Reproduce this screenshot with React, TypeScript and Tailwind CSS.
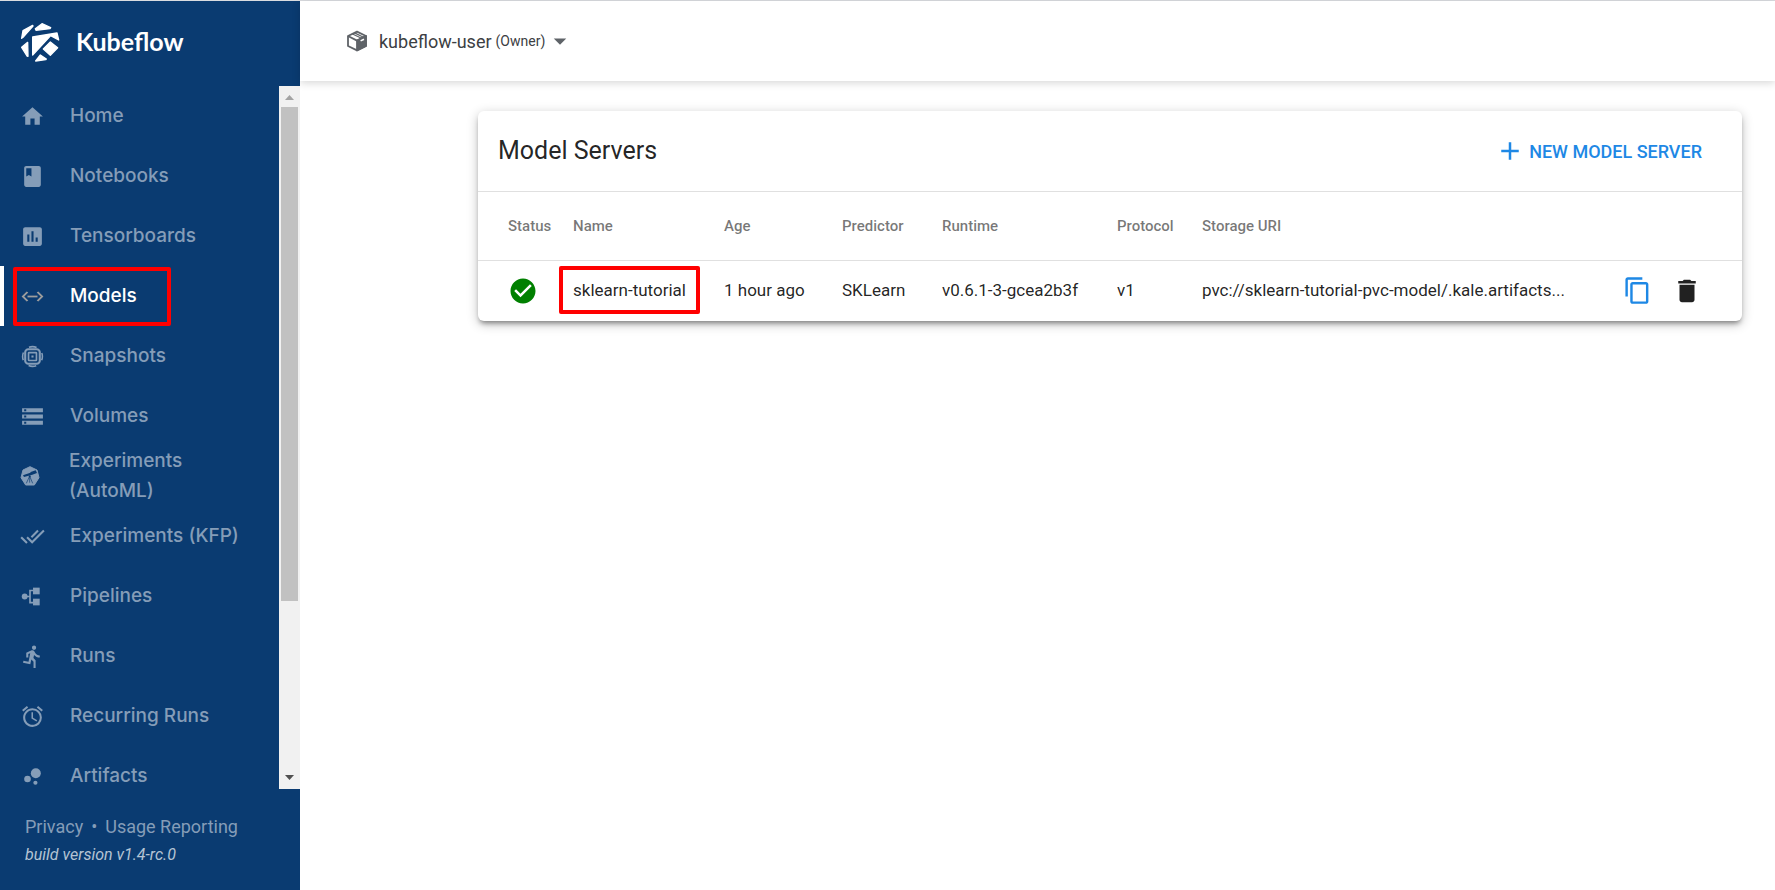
import React, { useState } from 'react';
import {
    MdAccessAlarm,
    MdAdd,
    MdArrowDropDown,
    MdAssessment,
    MdBubbleChart,
    MdCheckCircle,
    MdClass,
    MdContentCopy,
    MdDelete,
    MdDirectionsRun,
    MdDoneAll,
    MdHome,
    MdStorage,
} from 'react-icons/md';

function Logo() {
    return (
        <svg className="h-10 w-10" viewBox="0 2 120 120" fill="#fff" stroke="#fff" strokeWidth="4" strokeLinejoin="round">
            <path d="M5 51 9 28 38 12 39 14 11 46Z" />
            <path d="M46 22 66 7 92 19 90 22 48 27Z" />
            <path d="M38 47 111 35 116 56 92 43 38 101Z" />
            <path d="M91 62 113 79 91 102 70 83Z" />
            <path d="M23 63 24 105 21 104 5 78Z" />
            <path d="M61 101 79 113 77 115 47 119Z" />
        </svg>
    );
}

function ModelsIcon() {
    return (
        <svg className="h-[25px] w-[25px]" viewBox="0 0 24 24" fill="none" stroke="currentColor" strokeWidth="2">
            <path d="M7.2 6.6 2.8 12 7.2 17.4M16.8 6.6 21.2 12 16.8 17.4" transform="matrix(1 0 0 .8 0 2.4)" />
            <path d="M7.2 12H16.8" strokeWidth="1.7" />
        </svg>
    );
}

function SnapshotIcon() {
    return (
        <svg className="h-[25px] w-[25px]" viewBox="0 0 24 24" fill="none" stroke="currentColor">
            <circle cx="12" cy="12" r="9.5" strokeWidth="1.5" strokeDasharray="7.5 7.42" strokeDashoffset="3.75" />
            <rect x="5" y="5" width="14" height="14" rx="3" strokeWidth="2" />
            <rect x="8.2" y="8.2" width="7.6" height="7.6" rx="0.5" strokeWidth="1.6" />
            <rect x="11" y="11" width="2" height="2" fill="currentColor" stroke="none" />
        </svg>
    );
}

function KatibIcon() {
    return (
        <svg className="mr-1 h-5 w-5" viewBox="0 0 60 60">
            <path d="M30 2 51 12 57 35 43 57 17 57 3 35 9 12Z" fill="currentColor" stroke="currentColor" strokeWidth="3" strokeLinejoin="round" />
            <path d="M9 28 31 20 32 18 47 13 51 21 37 26 12 33Z" fill="#0a3b71" />
            <path d="M29 30 19 52M29 30V50M29 30 38 52" stroke="#0a3b71" strokeWidth="2" fill="none" />
            <circle cx="29" cy="31" r="3" fill="#0a3b71" />
        </svg>
    );
}

function PipelineIcon() {
    return (
        <svg className="h-[25px] w-[25px]" viewBox="0 0 24 24" fill="currentColor">
            <circle cx="4.5" cy="12" r="2.8" />
            <rect x="12.5" y="3.5" width="6.4" height="6.4" />
            <rect x="12.5" y="14.1" width="6.4" height="6.4" />
            <path d="M5 12H9.6M13 6.2H9.6V17.8H13" fill="none" stroke="currentColor" strokeWidth="1.6" />
        </svg>
    );
}

function PackageIcon() {
    return (
        <svg className="h-6 w-6" viewBox="0 0 24 24" fill="none" stroke="#5f6368" strokeWidth="1.8" strokeLinejoin="round">
            <path d="M12 2.6 21 7V17L12 21.4 3 17V7Z" />
            <path d="M12 11.6 21 7V17L12 21.4Z" fill="#5f6368" />
            <path d="M3 7 12 11.6 21 7" />
            <path d="M7.5 5 16.5 9.3M9.5 3.9 18.5 8.2" strokeWidth="1.2" />
            <path d="M15.6 11.9 19 10.2" stroke="#fff" strokeWidth="1.6" />
        </svg>
    );
}

const navItems = [
    { label: 'Home', icon: <MdHome size={25} /> },
    { label: 'Notebooks', icon: <MdClass size={25} /> },
    { label: 'Tensorboards', icon: <MdAssessment size={25} /> },
    { label: 'Models', icon: <ModelsIcon /> },
    { label: 'Snapshots', icon: <SnapshotIcon /> },
    { label: 'Volumes', icon: <MdStorage size={25} /> },
    { label: 'Experiments (AutoML)', icon: <KatibIcon /> },
    { label: 'Experiments (KFP)', icon: <MdDoneAll size={25} /> },
    { label: 'Pipelines', icon: <PipelineIcon /> },
    { label: 'Runs', icon: <MdDirectionsRun size={25} /> },
    { label: 'Recurring Runs', icon: <MdAccessAlarm size={25} /> },
    { label: 'Artifacts', icon: <MdBubbleChart size={25} /> },
];

const servers = [
    {
        name: 'sklearn-tutorial',
        age: '1 hour ago',
        predictor: 'SKLearn',
        runtime: 'v0.6.1-3-gcea2b3f',
        protocol: 'v1',
        uri: 'pvc://sklearn-tutorial-pvc-model/.kale.artifacts...',
    },
];

function Scrollbar() {
    return (
        <div className="flex w-[21px] shrink-0 flex-col items-center bg-[#f1f1f1]" aria-hidden="true">
            <svg className="h-[21px] w-[21px] shrink-0" viewBox="0 0 21 21">
                <path d="M6 14 10.5 9 15 14Z" fill="#a3a3a3" />
            </svg>
            <div className="w-[17px] flex-[495] bg-[#c1c1c1]" />
            <div className="flex-[167]" />
            <svg className="h-[21px] w-[21px] shrink-0" viewBox="0 0 21 21">
                <path d="M6 7 10.5 12 15 7Z" fill="#505050" />
            </svg>
        </div>
    );
}

function Sidebar() {
    const [active, setActive] = useState('Models');

    return (
        <aside className="flex w-[300px] shrink-0 flex-col bg-[#0a3b71] text-white">
            <a href="#" className="flex h-[85px] shrink-0 items-center gap-4 px-5 pb-1">
                <Logo />
                <span className="font-['Lato',sans-serif] text-[25px] font-bold">Kubeflow</span>
            </a>

            <div className="flex min-h-0 flex-1">
                <nav className="flex-1 overflow-hidden font-['Inter',sans-serif] text-[19px] font-medium leading-[30px]">
                    {navItems.map((item) => {
                        const isActive = item.label === active;
                        return (
                            <a
                                key={item.label}
                                href="#"
                                onClick={() => setActive(item.label)}
                                className={`relative flex h-[60px] items-center border-l-4 pl-4 pr-10 ${isActive ? 'border-white text-white' : 'border-transparent text-[#859db8]'}`}
                            >
                                <span className={`mr-[25px] shrink-0 ${isActive ? 'text-[#9d9d9d]' : ''}`}>{item.icon}</span>
                                <span>{item.label}</span>
                                {item.label === 'Models' && (
                                    <span className="absolute left-[9px] top-px h-[59px] w-[158px] rounded-xs border-4 border-[#ff0000]" />
                                )}
                            </a>
                        );
                    })}
                </nav>
                <Scrollbar />
            </div>

            <footer className="h-[101px] shrink-0 px-[25px] pt-6 font-['Roboto',sans-serif]">
                <div className="flex gap-2 text-[18px] leading-7 text-[#859db8]">
                    <a href="#">Privacy</a>
                    <span>•</span>
                    <a href="#">Usage Reporting</a>
                </div>
                <div className="text-base italic leading-7 text-[#b5c4d4]">build version v1.4-rc.0</div>
            </footer>
        </aside>
    );
}

export default function App() {
    return (
        <div className="flex h-screen border-t border-[#dadce0] bg-white font-['Roboto',sans-serif]">
            <Sidebar />

            <div className="flex min-w-0 flex-1 flex-col">
                <header className="flex h-20 shrink-0 items-center bg-white pl-[45px] shadow-[0_2px_8px_rgba(0,0,0,0.16)]">
                    <button className="flex items-center text-[#3c4043]">
                        <PackageIcon />
                        <span className="ml-[10px] text-[18px]">kubeflow-user</span>
                        <span className="ml-1 text-sm">(Owner)</span>
                        <MdArrowDropDown size={30} color="#5f6368" />
                    </button>
                </header>

                <main className="pl-[178px] pr-[33px] pt-[30px] text-black/87">
                    <section className="rounded-md bg-white shadow-[0_4px_5px_-2px_rgba(0,0,0,0.4),0_3px_12px_rgba(0,0,0,0.24)]">
                        <div className="flex h-20 items-center justify-between pl-5 pr-10">
                            <h1 className="text-[25px]">Model Servers</h1>
                            <button className="flex items-center gap-1 text-[18px] font-medium text-[#1e88e5]">
                                <MdAdd size={30} />
                                NEW MODEL SERVER
                            </button>
                        </div>

                        <table className="w-full table-fixed border-collapse text-left">
                            <colgroup>
                                <col className="w-[95px]" />
                                <col className="w-[151px]" />
                                <col className="w-[118px]" />
                                <col className="w-[100px]" />
                                <col className="w-[175px]" />
                                <col className="w-[85px]" />
                                <col />
                                <col className="w-[119px]" />
                            </colgroup>
                            <thead>
                                <tr className="h-[69px] border-y border-[#e0e0e0] text-[15px] text-black/54 [&>th]:font-medium">
                                    <th className="pl-[30px]">Status</th>
                                    <th>Name</th>
                                    <th>Age</th>
                                    <th>Predictor</th>
                                    <th>Runtime</th>
                                    <th>Protocol</th>
                                    <th>Storage URI</th>
                                    <th aria-label="Actions" />
                                </tr>
                            </thead>
                            <tbody>
                                {servers.map((s) => (
                                    <tr key={s.name} className="h-[60px] text-[17px]">
                                        <td className="pl-[30px]">
                                            <MdCheckCircle size={30} color="#008000" title="Ready" />
                                        </td>
                                        <td>
                                            <span className="relative">
                                                <a href="#">{s.name}</a>
                                                <span className="pointer-events-none absolute -inset-x-[14px] -inset-y-[14px] rounded-xs border-4 border-[#ff0000]" />
                                            </span>
                                        </td>
                                        <td>{s.age}</td>
                                        <td>{s.predictor}</td>
                                        <td>{s.runtime}</td>
                                        <td>{s.protocol}</td>
                                        <td className="truncate">{s.uri}</td>
                                        <td>
                                            <div className="flex items-center gap-5">
                                                <button aria-label="Copy" className="text-[#1e88e5]">
                                                    <MdContentCopy size={29} />
                                                </button>
                                                <button aria-label="Delete" className="text-[#212121]">
                                                    <MdDelete size={30} />
                                                </button>
                                            </div>
                                        </td>
                                    </tr>
                                ))}
                            </tbody>
                        </table>
                    </section>
                </main>
            </div>
        </div>
    );
}
